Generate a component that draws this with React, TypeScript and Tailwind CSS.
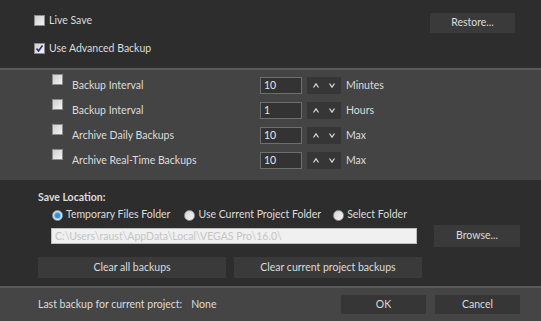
import React from "react";

const font = { fontFamily: 'Lato, "Noto Sans", sans-serif' };

function CheckBox({ checked = false }: { checked?: boolean }) {
  return (
    <div className="w-[11px] h-[11px] border border-[#8c8c8c] bg-gradient-to-br from-[#cfcfcf] to-[#f4f4f4] flex items-center justify-center shrink-0">
      {checked && (
        <svg width="9" height="9" viewBox="0 0 9 9">
          <path d="M1.5 4.5 L3.5 7 L7.5 1.5" stroke="#22307a" strokeWidth="1.6" fill="none" />
        </svg>
      )}
    </div>
  );
}

function Radio({ checked = false }: { checked?: boolean }) {
  return (
    <div className="w-[11px] h-[11px] rounded-full border border-[#9a9a9a] bg-gradient-to-br from-[#d4d4d4] to-[#f6f6f6] flex items-center justify-center shrink-0">
      {checked && <div className="w-[5px] h-[5px] rounded-full bg-[#2f8fd8] ring-1 ring-[#7cc0ee]" />}
    </div>
  );
}

function Spinner() {
  return (
    <div className="w-[34px] h-[17px] bg-[#363636] flex items-center justify-center gap-[10px]">
      <svg width="6" height="5" viewBox="0 0 6 5">
        <path d="M0.5 4.5 L3 0.8 L5.5 4.5" stroke="#d8d8d8" strokeWidth="1.2" fill="none" />
      </svg>
      <svg width="6" height="5" viewBox="0 0 6 5">
        <path d="M0.5 0.5 L3 4.2 L5.5 0.5" stroke="#d8d8d8" strokeWidth="1.2" fill="none" />
      </svg>
    </div>
  );
}

function Btn({ children, w }: { children: React.ReactNode; w: string }) {
  return (
    <div className={`${w} h-full bg-[#3a3a3a] flex items-center justify-center text-[#dcdcdc]`}>{children}</div>
  );
}

const rows = [
  { label: "Backup Interval", value: "10", unit: "Minutes" },
  { label: "Backup Interval", value: "1", unit: "Hours" },
  { label: "Archive Daily Backups", value: "10", unit: "Max" },
  { label: "Archive Real-Time Backups", value: "10", unit: "Max" },
];

export default function App() {
  return (
    <div className="w-[541px] h-[321px] bg-[#2d2d2d] text-[10.5px] text-[#dcdcdc] flex flex-col overflow-hidden" style={font}>
      {/* top options */}
      <div className="h-[68px] flex justify-between pl-[34px] pr-[26px]">
        <div className="flex flex-col pt-[15px] gap-[17px]">
          <div className="flex items-center gap-[4px] h-[11px]">
            <CheckBox />
            <span>Live Save</span>
          </div>
          <div className="flex items-center gap-[4px] h-[11px]">
            <CheckBox checked />
            <span>Use Advanced Backup</span>
          </div>
        </div>
        <div className="pt-[13px] h-[33px]">
          <Btn w="w-[85px]">Restore...</Btn>
        </div>
      </div>

      {/* advanced settings */}
      <div className="border-t-2 border-[#5a5a5a] bg-[#444444] pt-[3px] pb-[7px] pl-[52px]">
        {rows.map((r, i) => (
          <div key={i} className="h-[25px] flex items-center">
            <div className="self-start mt-[1px]">
              <CheckBox />
            </div>
            <span className="ml-[9px] w-[188px] pt-[1px]">{r.label}</span>
            <div className="w-[42px] h-[17px] border border-[#6e6e6e] bg-[#333333] pl-[3px] flex items-center text-[#e6e6e6]">
              {r.value}
            </div>
            <div className="ml-[5px]">
              <Spinner />
            </div>
            <span className="ml-[5px]">{r.unit}</span>
          </div>
        ))}
      </div>

      {/* save location */}
      <div className="flex-1 flex flex-col pl-[38px] pr-[21px]">
        <div className="font-bold mt-[9px] leading-[16px]">Save Location:</div>
        <div className="flex items-center h-[18px] mt-[1px] pl-[14px]">
          <Radio checked />
          <span className="ml-[3px]">Temporary Files Folder</span>
          <div className="ml-[14px]">
            <Radio />
          </div>
          <span className="ml-[3px]">Use Current Project Folder</span>
          <div className="ml-[12px]">
            <Radio />
          </div>
          <span className="ml-[3px]">Select Folder</span>
        </div>
        <div className="flex items-center mt-[1px] pl-[13px] h-[22px]">
          <div className="w-[366px] h-[16px] bg-[#f0f0f0] border border-[#bdbdbd] text-[#c4c4c4] pl-[3px] flex items-center leading-none">
            C:\Users\raust\AppData\Local\VEGAS Pro\16.0\
          </div>
          <div className="ml-auto h-[22px]">
            <Btn w="w-[86px]">Browse...</Btn>
          </div>
        </div>
        <div className="flex gap-[8px] mt-[10px] h-[21px]">
          <Btn w="w-[188px]">Clear all backups</Btn>
          <Btn w="w-[188px]">Clear current project backups</Btn>
        </div>
      </div>

      {/* footer */}
      <div className="h-[35px] border-t-2 border-[#5a5a5a] bg-[#454545] flex items-center pl-[38px] pr-[21px]">
        <span>Last backup for current project:</span>
        <span className="ml-[9px]">None</span>
        <div className="ml-auto flex gap-[9px] h-[19px]">
          <Btn w="w-[85px] bg-[#363636]">OK</Btn>
          <Btn w="w-[85px] bg-[#363636]">Cancel</Btn>
        </div>
      </div>
    </div>
  );
}
